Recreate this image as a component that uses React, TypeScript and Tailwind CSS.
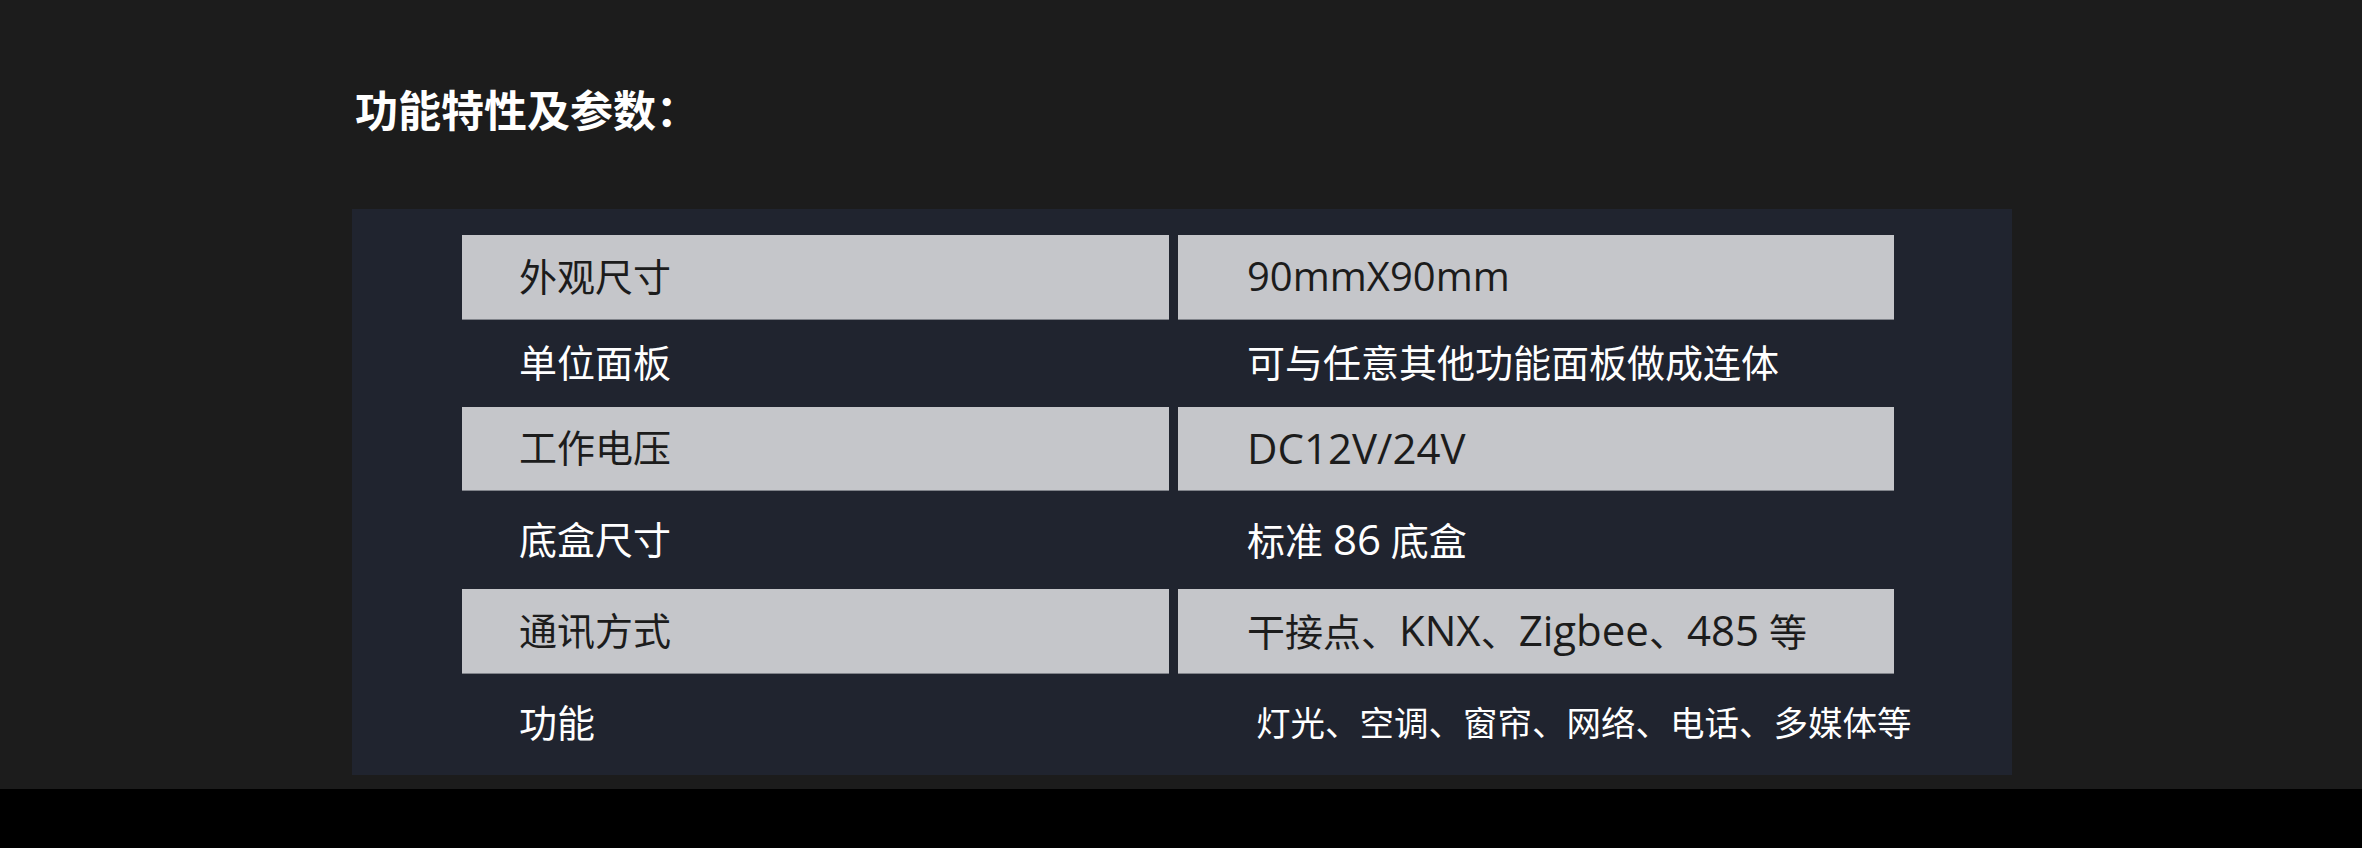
const rows = [
  { label: "外观尺寸", value: "90mmX90mm", shaded: true, h: "h-[85px]", latin: "text-[40px]" },
  { label: "单位面板", value: "可与任意其他功能面板做成连体", shaded: false, h: "h-[87px]", latin: "text-[42px]" },
  { label: "工作电压", value: "DC12V/24V", shaded: true, h: "h-[84px]", latin: "text-[42px]" },
  { label: "底盒尺寸", value: "标准 86 底盒", shaded: false, h: "h-[98px]", latin: "text-[42px]" },
  { label: "通讯方式", value: "干接点、KNX、Zigbee、485 等", shaded: true, h: "h-[85px]", latin: "text-[42px]" },
  { label: "功能", value: "灯光、空调、窗帘、网络、电话、多媒体等", shaded: false, h: "h-[101px]", latin: "text-[42px]", small: true },
];

// Latin parts of the text are set a little larger than the CJK parts
function Value({ text, latin }: { text: string; latin: string }) {
  const parts = text.split(/([A-Za-z0-9/]+)/);
  return (
    <span>
      {parts.map((p, i) =>
        /^[A-Za-z0-9/]+$/.test(p) ? (
          <span key={i} className={latin}>
            {p}
          </span>
        ) : (
          <span key={i}>{p}</span>
        )
      )}
    </span>
  );
}

export default function App() {
  return (
    <div
      className="w-[2362px] h-[848px] bg-black flex flex-col"
      style={{ fontFamily: '"Open Sans", "Noto Sans CJK SC", sans-serif' }}
    >
      <div className="h-[789px] bg-[#1c1c1c] pt-[86px] pl-[352px]">
        <h1
          className="pl-[3px] text-[43px] leading-[44px] font-bold text-white"
          style={{ fontFamily: '"Noto Sans CJK SC", sans-serif' }}
        >
          功能特性及参数：
        </h1>

        {/* 参数表 */}
        <div className="mt-[79px] w-[1660px] h-[566px] bg-[#20242f] pt-[26px] pl-[110px]">
          <div className="grid grid-cols-[707px_716px] gap-x-[9px]">
            {rows.map((r) => (
              <div key={r.label} className="contents">
                <div
                  className={`${r.h} flex items-center pl-[57px] text-[38px] ${
                    r.small ? "pb-[4px]" : "pb-[2px]"
                  } ${
                    r.shaded
                      ? "bg-[#c5c6ca] text-[#1c1c1c] border-b border-[#80838a]"
                      : "text-white"
                  }`}
                >
                  {r.label}
                </div>
                <div
                  className={`${r.h} flex items-center whitespace-nowrap ${
                    r.small ? "pl-[78px] text-[34.5px] pb-[4px]" : "pl-[69px] text-[38px] pb-[3px]"
                  } ${
                    r.shaded
                      ? "bg-[#c5c6ca] text-[#1c1c1c] border-b border-[#80838a]"
                      : "text-white"
                  }`}
                >
                  <Value text={r.value} latin={r.latin} />
                </div>
              </div>
            ))}
          </div>
        </div>
      </div>
    </div>
  );
}
